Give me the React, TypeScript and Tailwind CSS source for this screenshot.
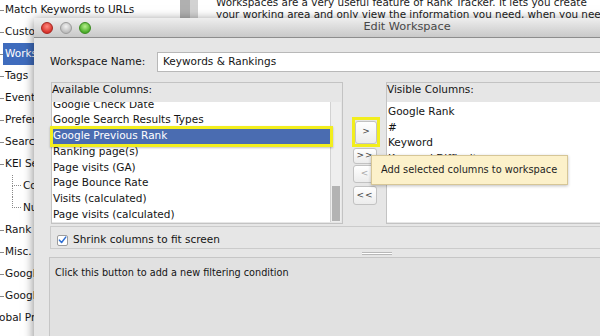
import React from "react";

const treeRows: { label: string; kind: "root" | "child" | "childLast" | "clip"; selected?: boolean }[] = [
  { label: "Match Keywords to URLs", kind: "root" },
  { label: "Custom Fields", kind: "root" },
  { label: "Workspaces", kind: "root", selected: true },
  { label: "Tags", kind: "root" },
  { label: "Events", kind: "root" },
  { label: "Preferences", kind: "root" },
  { label: "Search Engines", kind: "root" },
  { label: "KEI Settings", kind: "root" },
  { label: "Competition", kind: "child" },
  { label: "Number of Searches", kind: "childLast" },
  { label: "Rank Tracking", kind: "root" },
  { label: "Misc.", kind: "root" },
  { label: "Google Analytics", kind: "root" },
  { label: "Google AdWords", kind: "root" },
  { label: "Global Preferences", kind: "clip" },
];

const available = [
  "Google Check Date",
  "Google Search Results Types",
  "Google Previous Rank",
  "Ranking page(s)",
  "Page visits (GA)",
  "Page Bounce Rate",
  "Visits (calculated)",
  "Page visits (calculated)",
];

const visible = ["Google Rank", "#", "Keyword", "Keyword Difficulty"];

function TreeRow({ row }: { row: (typeof treeRows)[number] }) {
  if (row.kind === "clip") {
    return (
      <div className="h-[22px] flex items-center whitespace-nowrap">
        <span className="ml-[-12px]">{row.label}</span>
      </div>
    );
  }
  if (row.kind === "child" || row.kind === "childLast") {
    return (
      <div className="h-[22px] flex items-stretch whitespace-nowrap pl-[12px]">
        <div className="w-[9px] flex flex-col">
          <div className="h-1/2 border-l border-b border-dotted border-[#8a8a8a]" />
          <div className={row.kind === "child" ? "flex-1 border-l border-dotted border-[#8a8a8a]" : "flex-1"} />
        </div>
        <span className="self-center ml-[2px]">{row.label}</span>
      </div>
    );
  }
  return (
    <div className="h-[22px] flex items-center whitespace-nowrap">
      <span className="w-[4px] h-px bg-[#8a8a8a]" />
      {row.selected ? (
        <span className="flex-1 h-full flex items-center bg-[#3f6cbd] text-white pl-[2px] ml-[-1px]">{row.label}</span>
      ) : (
        <span className="ml-[1px]">{row.label}</span>
      )}
    </div>
  );
}

function SmallButton({ label, h, mt, disabled }: { label: string; h: string; mt: string; disabled?: boolean }) {
  return (
    <div
      className={`${h} ${mt} ml-[1px] w-[24px] rounded-[3px] border border-[#c2c2c2] bg-gradient-to-b from-[#ffffff] to-[#ececec] flex items-center justify-center text-[9px] tracking-[1px] ${
        disabled ? "text-[#a8a8a8]" : "text-[#444]"
      }`}
    >
      {label}
    </div>
  );
}

export default function App() {
  return (
    <div className="relative w-[600px] h-[336px] overflow-hidden bg-white font-['DejaVu_Sans',sans-serif] text-[10.5px] text-[#141414]">
      {/* background application */}
      <div className="flex h-full">
        <div className="w-[180px] h-full bg-white overflow-hidden">
          <div className="mt-[-1px] flex flex-col">
            {treeRows.map((r, i) => (
              <TreeRow key={i} row={r} />
            ))}
          </div>
        </div>
        <div className="w-[10px] h-full bg-[#b0b0b0]" />
        <div className="w-[8px] h-full bg-[#d2d2d2]" />
        <div className="flex-1 pl-[18px] mt-[-4px] text-[10.4px] leading-[12px] whitespace-nowrap text-[#1a1a1a] overflow-hidden">
          <div>Workspaces are a very useful feature of Rank Tracker. It lets you create</div>
          <div>your working area and only view the information you need, when you need it.</div>
        </div>
      </div>

      {/* dialog window */}
      <div className="absolute left-[34px] top-[18px] w-[746px] h-[330px] bg-[#e6e6e6] shadow-[0_2px_10px_rgba(0,0,0,0.5)] flex flex-col">
        <div className="h-[20px] shrink-0 bg-gradient-to-b from-[#eeeeee] to-[#c9c9c9] border-b border-[#8d8d8d] grid grid-cols-[1fr_auto_1fr] items-center">
          <div className="flex items-center gap-[7px] pl-[7px]">
            <span className="w-[12px] h-[12px] rounded-full bg-[radial-gradient(circle_at_50%_35%,#ff8a80,#d8322b_70%)] border border-[#a52620]" />
            <span className="w-[12px] h-[12px] rounded-full bg-[radial-gradient(circle_at_50%_35%,#f2f2f2,#bdbdbd_70%)] border border-[#9c9c9c]" />
            <span className="w-[12px] h-[12px] rounded-full bg-[radial-gradient(circle_at_50%_35%,#b8f08e,#4cae2a_70%)] border border-[#3a8a20]" />
          </div>
          <div className="text-[11.3px] text-[#474747]">Edit Workspace</div>
          <div />
        </div>

        <div className="flex-1 flex flex-col pl-[16px] pr-[16px] pt-[14px]">
          {/* name row */}
          <div className="flex items-center h-[20px]">
            <div className="w-[107px]">Workspace Name:</div>
            <div className="flex-1 h-[20px] bg-white border border-[#b8b8b8] pl-[5px] flex items-center">Keywords &amp; Rankings</div>
          </div>

          {/* column panels */}
          <div className="mt-[10px] h-[142px] flex">
            <div className="ml-[1px] w-[292px] border border-[#c3c3c3] flex flex-col">
              <div className="h-[19px] leading-[13px]">Available Columns:</div>
              <div className="h-[120px] flex">
                <div className="w-[278px] bg-white overflow-hidden">
                  <div className="mt-[-5.5px] flex flex-col">
                    {available.map((t, i) => (
                      <div
                        key={t}
                        className={`h-[15.8px] leading-[15.8px] pl-[1px] whitespace-nowrap ${
                          i === 2 ? "bg-[#4a6cb1] text-white" : ""
                        }`}
                      >
                        {t}
                      </div>
                    ))}
                  </div>
                </div>
                <div className="w-[11px] bg-[#eeeeee] border-l border-[#d2d2d2] flex flex-col justify-end">
                  <div className="h-[35px] mx-[1px] mb-[1px] bg-[#b3b3b3]" />
                </div>
              </div>
            </div>

            <div className="ml-[9px] w-[28px] flex flex-col pt-[35px]">
              <div className="h-[30px] w-[28px] border-[3px] border-[#f2ee1e] flex items-center justify-center">
                <div className="w-[22px] h-[23px] rounded-[3px] border border-[#c2c2c2] bg-gradient-to-b from-[#ffffff] to-[#ececec] flex items-center justify-center text-[9px] text-[#444]">
                  &gt;
                </div>
              </div>
              <SmallButton label=">>" h="h-[16px]" mt="mt-[1px]" />
              <SmallButton label="<" h="h-[18px]" mt="mt-[1px]" disabled />
              <SmallButton label="<<" h="h-[19px]" mt="mt-[3px]" />
            </div>

            <div className="ml-[6px] flex-1 border border-[#c3c3c3] flex flex-col">
              <div className="h-[19px] leading-[13px]">Visible Columns:</div>
              <div className="h-[120px] bg-white overflow-hidden">
                <div className="pt-[2px] flex flex-col">
                  {visible.map((t) => (
                    <div key={t} className="h-[15.6px] leading-[15.6px] pl-[1px] whitespace-nowrap">
                      {t}
                    </div>
                  ))}
                </div>
              </div>
            </div>
          </div>

          {/* checkbox row */}
          <div className="mt-[2px] h-[23px] border border-[#cbcbcb] flex items-center pl-[6px] pt-[5px]">
            <div className="w-[11px] h-[11px] bg-white border border-[#9c9c9c] rounded-[2px] flex items-center justify-center">
              <svg width="10" height="10" viewBox="0 0 10 10">
                <path d="M1.6 5.2 L4 7.8 L8.6 1.8" fill="none" stroke="#2f6fd3" strokeWidth="1.7" strokeLinecap="round" strokeLinejoin="round" />
              </svg>
            </div>
            <span className="ml-[5px]">Shrink columns to fit screen</span>
          </div>

          {/* splitter */}
          <div className="h-[8px] pt-[3px] pl-[312px]">
            <div className="w-[30px] h-px bg-[#b8b8b8]" />
            <div className="w-[30px] h-px bg-white" />
            <div className="w-[30px] h-px bg-[#b8b8b8]" />
          </div>

          {/* filter panel */}
          <div className="flex-1 ml-[-1px] bg-[#e1e1e1] border-t border-l border-[#c6c6c6] pl-[5px] pt-[8px] leading-[14px] text-[9.7px]">
            Click this button to add a new filtering condition
          </div>
        </div>
      </div>

      {/* annotation: yellow highlight around selected row */}
      <div className="absolute left-[50px] top-[126px] w-[283px] h-[21px] border-[3px] border-[#f2ee1e] shadow-[0_1px_2px_rgba(0,0,0,0.25)]" />

      {/* tooltip */}
      <div className="absolute left-[371px] top-[155px] w-[197px] h-[30px] bg-[#fcf1ca] border border-[#d6c697] shadow-[0_1px_3px_rgba(0,0,0,0.25)] flex items-center pl-[9px] text-[9.8px] text-[#1e1e1e] whitespace-nowrap">
        Add selected columns to workspace
      </div>
    </div>
  );
}
